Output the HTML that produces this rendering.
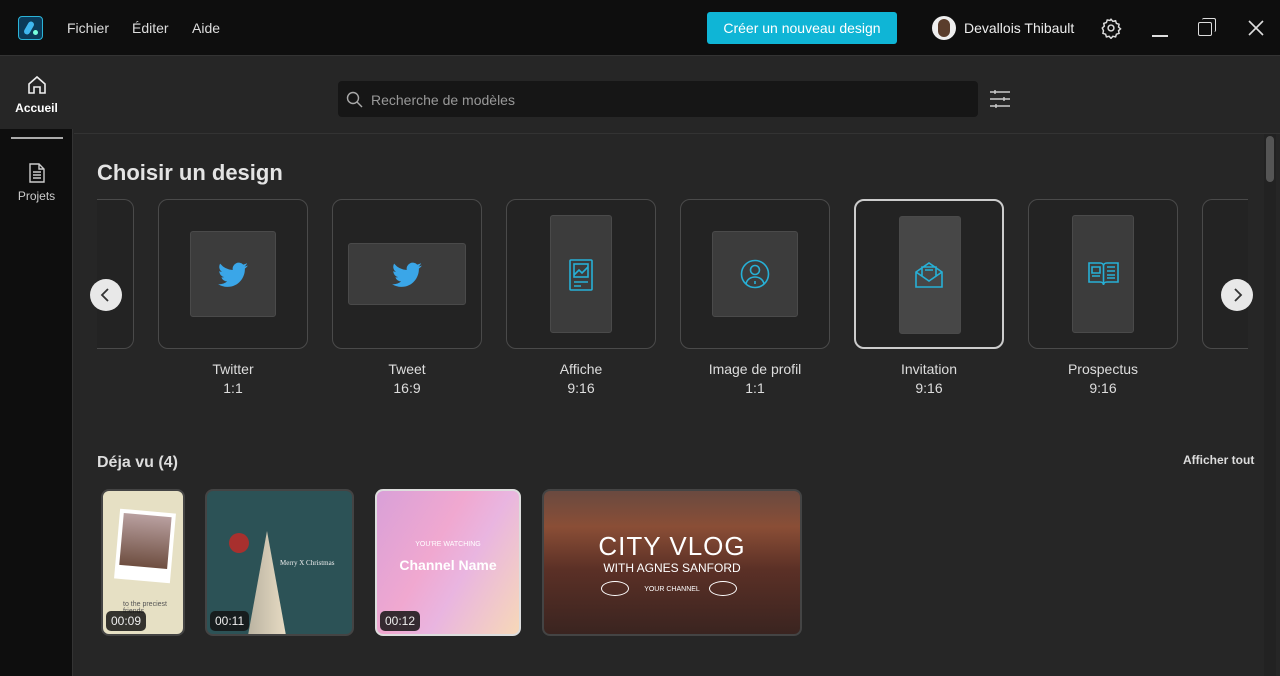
<!DOCTYPE html>
<html><head><meta charset="utf-8"><style>
*{box-sizing:border-box;margin:0;padding:0}
body{width:1280px;height:676px;background:#262626;font-family:"Liberation Sans",sans-serif;color:#e6e6e6;position:relative;overflow:hidden}
.top{position:absolute;left:0;top:0;width:1280px;height:56px;background:#0e0e0e;border-bottom:1px solid #333}
.abs{position:absolute}
.menu{font-size:14px;color:#ddd;top:20px}
.side{position:absolute;left:0;top:57px;width:73px;height:619px;background:#0e0e0e;border-right:1px solid #333}
.card{position:absolute;top:199px;width:150px;height:150px;border:1.5px solid #4a4a4a;border-radius:10px;background:#232323}
.inner{position:absolute;background:#3c3c3c;border:1px solid #4a4a4a;border-radius:3px}
.lbl{position:absolute;top:360px;width:150px;text-align:center;font-size:14px;color:#ddd;line-height:19px}
.thumb{position:absolute;top:489px;height:147px;border:2px solid #444;border-radius:8px;overflow:hidden}
.time{position:absolute;left:3px;bottom:3px;background:rgba(20,20,20,.85);color:#eee;font-size:12px;padding:3px 5px;border-radius:5px}
.arrow{position:absolute;top:279px;width:32px;height:32px;border-radius:50%;background:#e8e8e8}
</style></head><body>
<div class="top">
 <div class="abs" style="left:18px;top:16px;width:25px;height:24px;border:1.5px solid #2bb4d8;border-radius:4px;background:#0b3b5a"><div style="position:absolute;left:7px;top:4px;width:6px;height:14px;background:#3fb7f0;border-radius:3px;transform:rotate(30deg)"></div><div style="position:absolute;left:14px;top:13px;width:5px;height:5px;background:#7fd;border-radius:50%"></div></div>
 <div class="abs menu" style="left:67px">Fichier</div>
 <div class="abs menu" style="left:132px">Éditer</div>
 <div class="abs menu" style="left:192px">Aide</div>
 <div class="abs" style="left:707px;top:12px;width:190px;height:32px;background:#0fb5d6;border-radius:3px;color:#fff;font-size:14px;text-align:center;line-height:32px">Créer un nouveau design</div>
 <div class="abs" style="left:932px;top:16px;width:24px;height:24px;border-radius:50%;background:#eee;overflow:hidden"><div style="position:absolute;left:6px;top:3px;width:12px;height:18px;border-radius:6px;background:#5a3d2c"></div></div>
 <div class="abs menu" style="left:964px;top:20px;color:#eee">Devallois Thibault</div>
 <svg class="abs" style="left:1100px;top:17px" width="22" height="22" viewBox="0 0 24 24" fill="none" stroke="#ddd" stroke-width="1.6"><circle cx="12" cy="12" r="3.2"/><path d="M12 2.5l2 2.2 3-.6.9 2.9 2.9.9-.6 3 2.2 2-2.2 2 .6 3-2.9.9-.9 2.9-3-.6-2 2.2-2-2.2-3 .6-.9-2.9-2.9-.9.6-3L2.5 12l2.2-2-.6-3 2.9-.9.9-2.9 3 .6z"/></svg>
 <div class="abs" style="left:1152px;top:35px;width:16px;height:1.5px;background:#ddd"></div>
 <div class="abs" style="left:1198px;top:22px;width:14px;height:14px;border:1.5px solid #ddd;border-radius:2px"></div>
 <div class="abs" style="left:1202px;top:18px;width:14px;height:14px;border-top:1.5px solid #ddd;border-right:1.5px solid #ddd;border-radius:2px"></div>
 <svg class="abs" style="left:1248px;top:20px" width="16" height="16" viewBox="0 0 16 16" stroke="#ddd" stroke-width="1.6"><path d="M1 1L15 15M15 1L1 15"/></svg>
</div>
<div class="side">
 <div class="abs" style="left:0;top:0;width:73px;height:72px;background:#262626"></div>
 <svg class="abs" style="left:27px;top:18px" width="20" height="20" viewBox="0 0 20 20" fill="none" stroke="#eee" stroke-width="1.6"><path d="M2 9L10 2l8 7v9h-5v-6H7v6H2z"/></svg>
 <div class="abs" style="left:0;top:44px;width:73px;text-align:center;font-size:12px;font-weight:bold;color:#fff">Accueil</div>
 <div class="abs" style="left:11px;top:80px;width:52px;height:1.5px;background:#aaa"></div>
 <svg class="abs" style="left:28px;top:106px" width="18" height="20" viewBox="0 0 18 20" fill="none" stroke="#ccc" stroke-width="1.4"><path d="M2 1h9l5 5v13H2z M11 1v5h5 M5 9h8M5 12h8M5 15h8"/></svg>
 <div class="abs" style="left:0;top:132px;width:73px;text-align:center;font-size:12px;color:#ccc">Projets</div>
</div>
<div class="abs" style="left:74px;top:133px;width:1206px;height:1px;background:#333"></div>
<div class="abs" style="left:338px;top:81px;width:640px;height:36px;background:#161616;border-radius:4px"></div>
<svg class="abs" style="left:346px;top:91px" width="17" height="17" viewBox="0 0 17 17" fill="none" stroke="#aaa" stroke-width="1.4"><circle cx="7" cy="7" r="5.5"/><path d="M11 11l5 5"/></svg>
<div class="abs" style="left:371px;top:92px;font-size:14px;color:#999">Recherche de modèles</div>
<svg class="abs" style="left:989px;top:88px" width="22" height="22" viewBox="0 0 22 22" stroke="#ccc" stroke-width="1.4"><path d="M1 4h20M1 11h20M1 18h20M6 2v4M15 9v4M7 16v4"/></svg>
<div class="abs" style="left:1264px;top:134px;width:12px;height:542px;background:#222"></div>
<div class="abs" style="left:1266px;top:136px;width:8px;height:46px;background:#555;border-radius:4px"></div>
<div class="abs" style="left:97px;top:160px;font-size:22px;font-weight:bold;color:#e4e4e4">Choisir un design</div>
<div class="card" style="left:97px;width:37px;border-left:none;border-radius:0 10px 10px 0"></div>
<div class="card" style="left:158px"><div class="inner" style="left:31px;top:31px;width:86px;height:86px"></div></div>
<div class="card" style="left:332px"><div class="inner" style="left:15px;top:43px;width:118px;height:62px"></div></div>
<div class="card" style="left:506px"><div class="inner" style="left:43px;top:15px;width:62px;height:118px"></div></div>
<div class="card" style="left:680px"><div class="inner" style="left:31px;top:31px;width:86px;height:86px"></div></div>
<div class="card" style="left:854px;border:2px solid #ccc"><div class="inner" style="left:43px;top:15px;width:62px;height:118px;background:#474747"></div></div>
<div class="card" style="left:1028px"><div class="inner" style="left:43px;top:15px;width:62px;height:118px"></div></div>
<div class="card" style="left:1202px;width:46px;border-right:none;border-radius:10px 0 0 10px"></div>
<svg class="abs" style="left:218px;top:262px" width="30" height="26" viewBox="0 0 24 20"><path fill="#3aa6e8" d="M24 2.4a10 10 0 0 1-2.8.8A5 5 0 0 0 23.3.5a10 10 0 0 1-3.1 1.2A4.9 4.9 0 0 0 11.8 6 14 14 0 0 1 1.7.9a4.9 4.9 0 0 0 1.5 6.6A4.9 4.9 0 0 1 1 6.9a4.9 4.9 0 0 0 3.9 4.8 5 5 0 0 1-2.2.1 4.9 4.9 0 0 0 4.6 3.4A9.9 9.9 0 0 1 0 17.3 14 14 0 0 0 7.5 19.500c9 0 14-7.5 14-14v-.6A10 10 0 0 0 24 2.4z"/></svg>
<svg class="abs" style="left:392px;top:262px" width="30" height="26" viewBox="0 0 24 20"><path fill="#3aa6e8" d="M24 2.4a10 10 0 0 1-2.8.8A5 5 0 0 0 23.3.5a10 10 0 0 1-3.1 1.2A4.9 4.9 0 0 0 11.8 6 14 14 0 0 1 1.7.9a4.9 4.9 0 0 0 1.5 6.6A4.9 4.9 0 0 1 1 6.9a4.9 4.9 0 0 0 3.9 4.8 5 5 0 0 1-2.2.1 4.9 4.9 0 0 0 4.6 3.4A9.9 9.9 0 0 1 0 17.3 14 14 0 0 0 7.5 19.5c9 0 14-7.5 14-14v-.6A10 10 0 0 0 24 2.4z"/></svg>
<svg class="abs" style="left:569px;top:259px" width="24" height="32" viewBox="0 0 24 32" fill="none" stroke="#27b0d6" stroke-width="1.6"><rect x="1" y="1" width="22" height="30" rx="1"/><rect x="5" y="5" width="14" height="13"/><path d="M5 16l5-5 3 3 6-6M5 23h14M5 27h7"/></svg>
<svg class="abs" style="left:740px;top:259px" width="30" height="30" viewBox="0 0 30 30" fill="none" stroke="#27b0d6" stroke-width="1.6"><circle cx="15" cy="15" r="13.5"/><circle cx="15" cy="11" r="4.5"/><path d="M6 25c1-5 5-7 9-7s8 2 9 7M15 22v3"/></svg>
<svg class="abs" style="left:915px;top:262px" width="28" height="26" viewBox="0 0 28 26" fill="none" stroke="#27b0d6" stroke-width="1.6"><path d="M1 10v15h26V10L14 1z M1 10l13 9 13-9 M7 14V5h14v9 M10 8h8"/></svg>
<svg class="abs" style="left:1088px;top:261px" width="31" height="26" viewBox="0 0 31 26" fill="none" stroke="#27b0d6" stroke-width="1.6"><path d="M1 2h11c2 0 3.5 1 3.5 3v19c0-2-1.5-3-3.5-3H1z M30 2H19c-2 0-3.5 1-3.5 3v19c0-2 1.5-3 3.5-3h11z M4 6h8v6H4zM4 15h8M19 6h8M19 10h8M19 14h8M19 17h8"/></svg>
<div class="arrow" style="left:90px"><svg width="32" height="32" viewBox="0 0 32 32" fill="none" stroke="#333" stroke-width="1.8"><path d="M18 10l-6 6 6 6"/></svg></div>
<div class="arrow" style="left:1221px"><svg width="32" height="32" viewBox="0 0 32 32" fill="none" stroke="#333" stroke-width="1.8"><path d="M14 10l6 6-6 6"/></svg></div>
<div class="lbl" style="left:158px">Twitter<br>1:1</div>
<div class="lbl" style="left:332px">Tweet<br>16:9</div>
<div class="lbl" style="left:506px">Affiche<br>9:16</div>
<div class="lbl" style="left:680px">Image de profil<br>1:1</div>
<div class="lbl" style="left:854px">Invitation<br>9:16</div>
<div class="lbl" style="left:1028px">Prospectus<br>9:16</div>
<div class="abs" style="left:97px;top:454px;font-size:16px;font-weight:bold;color:#ddd">Déja vu (4)</div>
<div class="abs" style="left:1183px;top:453px;font-size:12px;font-weight:bold;color:#ddd">Afficher tout</div>
<div class="thumb" style="left:101px;width:84px;background:#e6e0c4">
 <div class="abs" style="left:14px;top:20px;width:56px;height:70px;background:#fff;transform:rotate(5deg)"><div style="margin:4px;height:52px;background:linear-gradient(#b9a0a0,#6e4e40)"></div></div>
 <div class="abs" style="left:20px;top:110px;font-size:7px;color:#555">to the preciest friends</div>
 <div class="time">00:09</div></div>
<div class="thumb" style="left:205px;width:149px;background:#2c5256">
 <div class="abs" style="left:40px;top:40px;width:40px;height:110px;background:linear-gradient(90deg,#b9b2a0,#e8dcc4);clip-path:polygon(50% 0,100% 100%,0 100%)"></div>
 <div class="abs" style="left:22px;top:42px;width:20px;height:20px;border-radius:50%;background:#a8302e"></div>
 <div class="abs" style="left:73px;top:68px;font-size:7px;color:#eee;font-family:'Liberation Serif',serif">Merry X Christmas</div>
 <div class="time">00:11</div></div>
<div class="thumb" style="left:375px;width:146px;border-color:#ddd;background:linear-gradient(120deg,#d9a0d8,#f0a8d0 40%,#e9b5e0 60%,#f7d8b8)">
 <div class="abs" style="left:0;top:50px;width:142px;text-align:center;font-size:7px;color:#fff">YOU'RE WATCHING</div>
 <div class="abs" style="left:0;top:66px;width:142px;text-align:center;font-size:14px;font-weight:bold;color:#fff">Channel Name</div>
 <div class="time">00:12</div></div>
<div class="thumb" style="left:542px;width:260px;background:linear-gradient(#6a4a40,#8a4e36 25%,#5b3026 55%,#3a2420)">
 <div class="abs" style="left:0;top:40px;width:256px;text-align:center;font-size:26px;color:#fff;letter-spacing:1px">CITY VLOG</div>
 <div class="abs" style="left:0;top:70px;width:256px;text-align:center;font-size:12px;color:#fff">WITH AGNES SANFORD</div>
 <div class="abs" style="left:0;top:95px;width:256px;text-align:center;font-size:7px;color:#fff">YOUR CHANNEL</div>
 <div class="abs" style="left:57px;top:90px;width:28px;height:15px;border:1px solid #fff;border-radius:50%"></div>
 <div class="abs" style="left:165px;top:90px;width:28px;height:15px;border:1px solid #fff;border-radius:50%"></div>
</div>
</body></html>
